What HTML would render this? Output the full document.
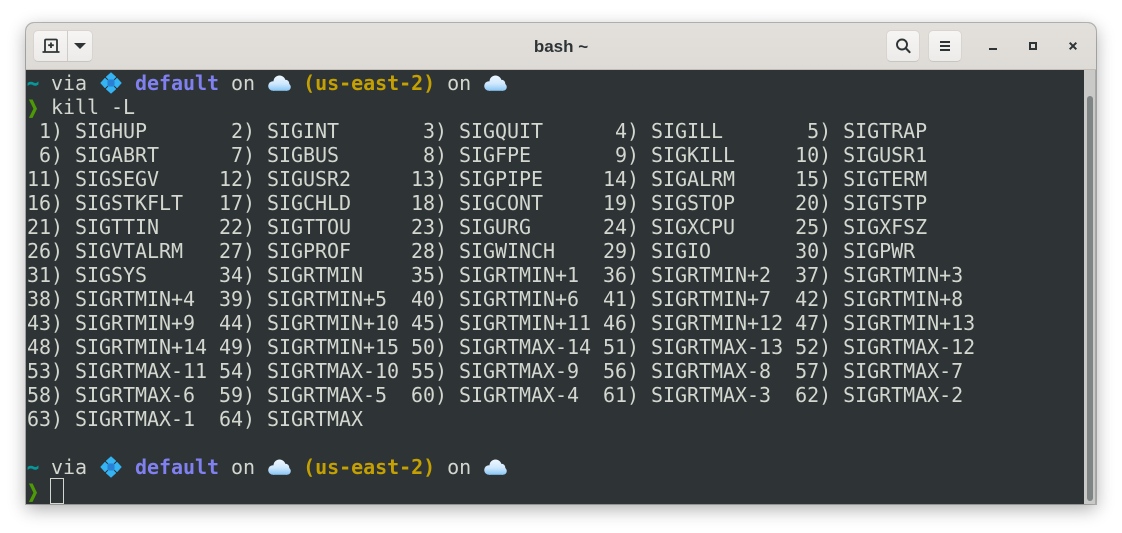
<!DOCTYPE html>
<html><head><meta charset="utf-8">
<style>
html,body{margin:0;padding:0;width:1122px;height:533px;background:#fff;overflow:hidden}
#win{position:absolute;left:26px;top:23px;width:1070px;height:481px;border-radius:8px 8px 0 0;box-shadow:0 5px 18px rgba(0,0,0,.33),0 0 0 1px rgba(0,0,0,.25);background:#2e3436;overflow:hidden}
#hdr{position:absolute;left:0;top:0;width:1070px;height:47px;background:linear-gradient(#e3e0dc,#dedbd7);border-bottom:1px solid #c4bdb6;box-sizing:border-box}
.btn{position:absolute;top:7px;height:32px;box-sizing:border-box;border:1px solid #d8d4cf;border-bottom-color:#cbc5bf;border-radius:5px;background:linear-gradient(#f6f5f4,#edebe9)}
#title{position:absolute;left:0;width:1070px;top:14px;text-align:center;font:bold 17px/20px "Liberation Sans",sans-serif;color:#2e3436}
#term{position:absolute;left:1px;top:48px;margin:0;font:20px/24px "DejaVu Sans Mono","Liberation Mono",monospace;letter-spacing:-.04px;color:#d3d7cf;white-space:pre}
.c{color:#06989a;font-weight:bold;-webkit-text-stroke:.5px #06989a}.g{color:#4e9a06;font-weight:bold;display:inline-block;transform:scale(.9,1.2);-webkit-text-stroke:.7px #4e9a06}.p{color:#8080f0;font-weight:bold}.y{color:#c4a000;font-weight:bold}
#sb{position:absolute;left:1058px;top:47px;width:12px;height:434px;background:#c9c9c7;border-right:1px solid #a9a9a7;box-sizing:border-box}
#th{position:absolute;left:3px;top:26px;width:6px;height:405px;background:#7f8584;border-radius:3px}
#cur{position:absolute;left:24px;top:455px;width:14px;height:26px;box-sizing:border-box;border:1px solid #d3d7cf}
svg{position:absolute;display:block}
</style></head><body>
<div id="win">
<div id="hdr">
<div class="btn" style="left:7px;width:60px"></div>
<div style="position:absolute;left:41px;top:8px;width:1px;height:30px;background:#d0cbc5"></div>
<svg style="left:16px;top:14px" width="18" height="18" viewBox="0 0 18 18"><path d="M3 15V3.500a1 1 0 0 1 1-1h10a1 1 0 0 1 1 1V15M0.500 15h17" fill="none" stroke="#2e3436" stroke-width="1.800"/><path d="M9 5.500v5.500M6.200 8.200h5.600" stroke="#2e3436" stroke-width="1.800"/></svg>
<svg style="left:47px;top:19px" width="14" height="8" viewBox="0 0 14 8"><path d="M1 1h12L7 7z" fill="#2e3436"/></svg>
<div id="title">bash ~</div>
<div class="btn" style="left:860px;width:34px"></div>
<svg style="left:868px;top:14px" width="18" height="18" viewBox="0 0 18 18"><circle cx="8" cy="7.500" r="5" fill="none" stroke="#2e3436" stroke-width="1.900"/><path d="M11.800 11.300l3.800 3.800" stroke="#2e3436" stroke-width="2.100" stroke-linecap="round"/></svg>
<div class="btn" style="left:902px;width:34px"></div>
<svg style="left:910px;top:14px" width="18" height="18" viewBox="0 0 18 18"><path d="M4 5h10M4 9h10M4 13h10" stroke="#2e3436" stroke-width="2"/></svg>
<svg style="left:958px;top:14px" width="18" height="18" viewBox="0 0 18 18"><path d="M5 12h8" stroke="#2e3436" stroke-width="2"/></svg>
<svg style="left:998px;top:14px" width="18" height="18" viewBox="0 0 18 18"><rect x="6" y="6" width="6" height="6" fill="none" stroke="#2e3436" stroke-width="2"/></svg>
<svg style="left:1038px;top:14px" width="18" height="18" viewBox="0 0 18 18"><path d="M5.700 5.700l6.600 6.600M12.300 5.700l-6.600 6.600" stroke="#2e3436" stroke-width="2"/></svg>
</div>
<pre id="term"><span class="c">~</span> via    <span class="p">default</span> on    <span class="y">(us-east-2)</span> on
<span class="g">❯</span> kill -L
 1) SIGHUP       2) SIGINT       3) SIGQUIT      4) SIGILL       5) SIGTRAP
 6) SIGABRT      7) SIGBUS       8) SIGFPE       9) SIGKILL     10) SIGUSR1
11) SIGSEGV     12) SIGUSR2     13) SIGPIPE     14) SIGALRM     15) SIGTERM
16) SIGSTKFLT   17) SIGCHLD     18) SIGCONT     19) SIGSTOP     20) SIGTSTP
21) SIGTTIN     22) SIGTTOU     23) SIGURG      24) SIGXCPU     25) SIGXFSZ
26) SIGVTALRM   27) SIGPROF     28) SIGWINCH    29) SIGIO       30) SIGPWR
31) SIGSYS      34) SIGRTMIN    35) SIGRTMIN+1  36) SIGRTMIN+2  37) SIGRTMIN+3
38) SIGRTMIN+4  39) SIGRTMIN+5  40) SIGRTMIN+6  41) SIGRTMIN+7  42) SIGRTMIN+8
43) SIGRTMIN+9  44) SIGRTMIN+10 45) SIGRTMIN+11 46) SIGRTMIN+12 47) SIGRTMIN+13
48) SIGRTMIN+14 49) SIGRTMIN+15 50) SIGRTMAX-14 51) SIGRTMAX-13 52) SIGRTMAX-12
53) SIGRTMAX-11 54) SIGRTMAX-10 55) SIGRTMAX-9  56) SIGRTMAX-8  57) SIGRTMAX-7
58) SIGRTMAX-6  59) SIGRTMAX-5  60) SIGRTMAX-4  61) SIGRTMAX-3  62) SIGRTMAX-2
63) SIGRTMAX-1  64) SIGRTMAX

<span class="c">~</span> via    <span class="p">default</span> on    <span class="y">(us-east-2)</span> on
<span class="g">❯</span></pre>
<svg width="0" height="0" style="left:0;top:0"><defs>
<linearGradient id="cl" gradientUnits="userSpaceOnUse" x1="0" y1="0" x2="0" y2="16"><stop offset="0" stop-color="#f0f8ff"/><stop offset=".55" stop-color="#cfe8fd"/><stop offset="1" stop-color="#86c5f6"/></linearGradient>
<g id="dia"><g fill="#35b4f4" stroke="#35b4f4" stroke-width=".5" stroke-linejoin="round"><path d="M11 .5L16 5l-2.500 2.500h-5L6 5z"/><path d="M11 21.500L6 17l2.500-2.500h5L16 17z"/><path d="M.5 11L5 6l2.500 2.500v5L5 16z"/><path d="M21.500 11L17 16l-2.500-2.500v-5L17 6z"/></g><rect x="7.500" y="7.500" width="7" height="7" fill="#2a80d4"/></g>
<g id="cld" fill="url(#cl)"><circle cx="5" cy="11" r="4.800"/><circle cx="11.500" cy="6.500" r="6"/><circle cx="17.500" cy="8.500" r="3.800"/><circle cx="19" cy="12" r="3.800"/><rect x="5" y="8" width="14" height="7.800"/></g>
</defs></svg>
<svg style="left:74px;top:49px" width="22" height="22" viewBox="0 0 22 22"><use href="#dia"/></svg>
<svg style="left:242px;top:52px" width="24" height="17" viewBox="0 0 24 17"><use href="#cld"/></svg>
<svg style="left:458px;top:52px" width="24" height="17" viewBox="0 0 24 17"><use href="#cld"/></svg>
<svg style="left:74px;top:433px" width="22" height="22" viewBox="0 0 22 22"><use href="#dia"/></svg>
<svg style="left:242px;top:436px" width="24" height="17" viewBox="0 0 24 17"><use href="#cld"/></svg>
<svg style="left:458px;top:436px" width="24" height="17" viewBox="0 0 24 17"><use href="#cld"/></svg>
<div id="cur"></div>
<div id="sb"><div id="th"></div></div>
</div>
</body></html>
